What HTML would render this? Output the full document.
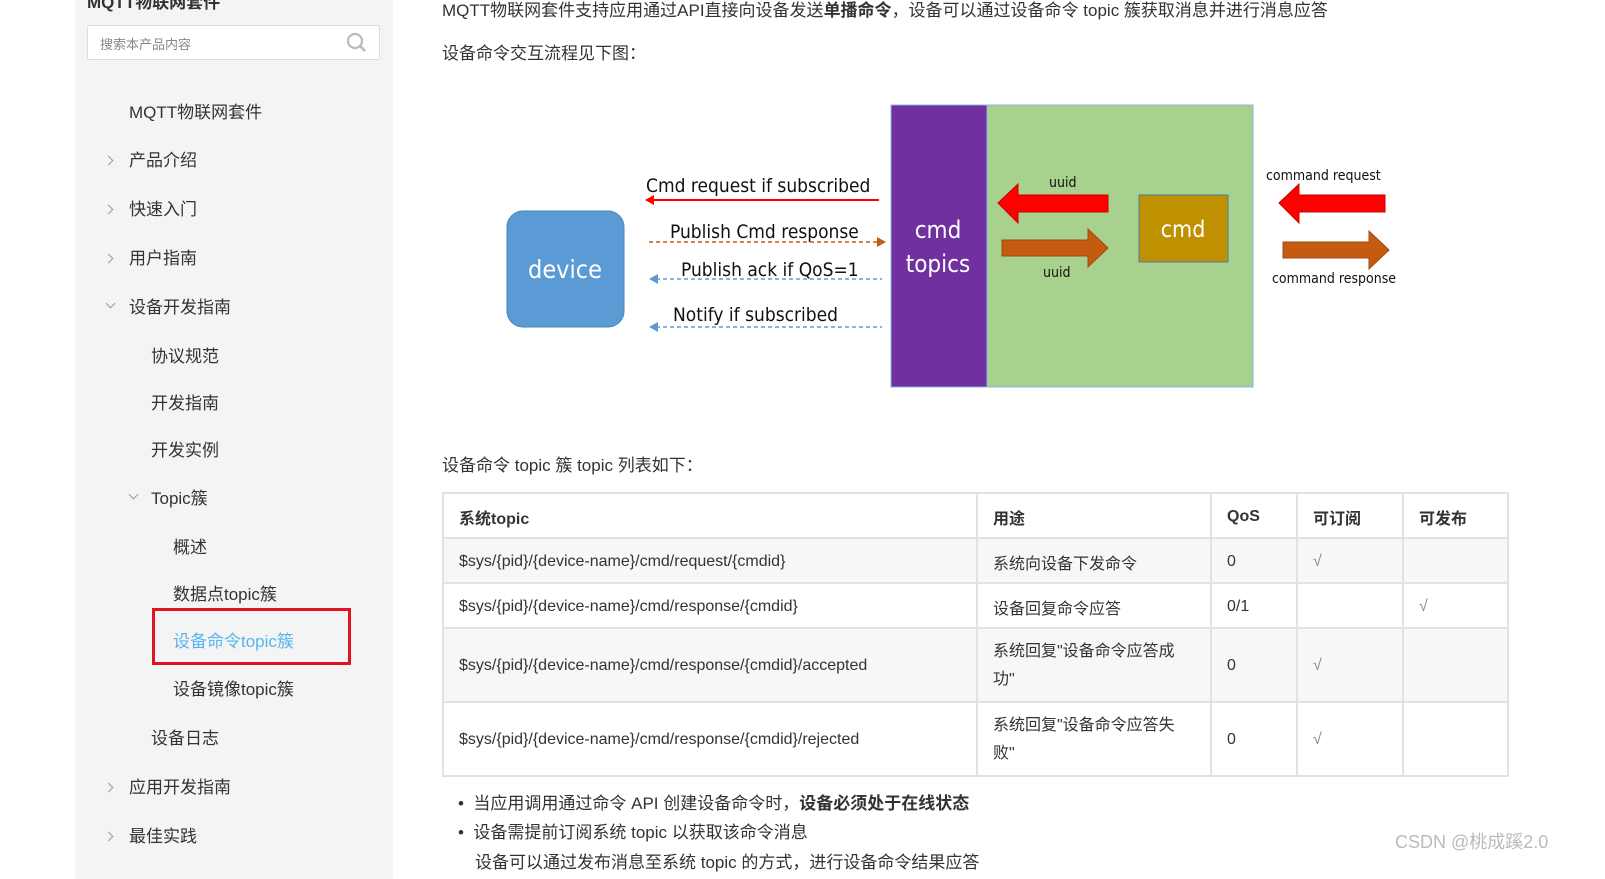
<!DOCTYPE html>
<html><head><meta charset="utf-8"><style>
*{margin:0;padding:0;box-sizing:border-box}
body{width:1605px;height:879px;overflow:hidden;background:#fff;font-family:"Liberation Sans","Noto Sans CJK SC",sans-serif;color:#333;position:relative}
.a{position:absolute;white-space:nowrap}
.side{position:absolute;left:75px;top:0;width:318px;height:879px;background:#f4f4f4}
.n{position:absolute;font-size:17px;color:#333;white-space:nowrap}
.chev{position:absolute;width:7px;height:7px;border-right:1.5px solid #999;border-bottom:1.5px solid #999}
.r{transform:rotate(-45deg)}.d{transform:rotate(45deg)}
table{position:absolute;left:442px;top:492px;width:1067px;border-collapse:collapse;font-size:16px;color:#333}
td,th{border:2px solid #e2e2e2;padding:2px 15px 0;text-align:left;vertical-align:middle}
th{height:45px;font-weight:bold}
tr.g td{background:#f7f7f7}
.ck{color:#888}
</style></head><body>
<div class="side">
 <div class="n" style="left:12px;top:-12px;font-weight:bold;color:#333">MQTT物联网套件</div>
 <div style="position:absolute;left:12px;top:25px;width:293px;height:35px;background:#fff;border:1px solid #ddd;border-radius:2px"></div>
 <div class="n" style="left:25px;top:34px;font-size:13px;color:#888">搜索本产品内容</div>
 <svg style="position:absolute;left:271px;top:32px" width="22" height="22" viewBox="0 0 22 22"><circle cx="9" cy="9" r="7" fill="none" stroke="#bbb" stroke-width="2.2"/><path d="M14 14l5 5" stroke="#bbb" stroke-width="2.6"/></svg>
 <div class="n" style="left:54px;top:98px">MQTT物联网套件</div>
 <div class="chev r" style="left:30px;top:157px"></div><div class="n" style="left:54px;top:146px">产品介绍</div>
 <div class="chev r" style="left:30px;top:206px"></div><div class="n" style="left:54px;top:195px">快速入门</div>
 <div class="chev r" style="left:30px;top:255px"></div><div class="n" style="left:54px;top:244px">用户指南</div>
 <div class="chev d" style="left:32px;top:300px"></div><div class="n" style="left:54px;top:293px">设备开发指南</div>
 <div class="n" style="left:76px;top:342px">协议规范</div>
 <div class="n" style="left:76px;top:389px">开发指南</div>
 <div class="n" style="left:76px;top:436px">开发实例</div>
 <div class="chev d" style="left:55px;top:491px"></div><div class="n" style="left:76px;top:484px">Topic簇</div>
 <div class="n" style="left:98px;top:533px">概述</div>
 <div class="n" style="left:98px;top:580px">数据点topic簇</div>
 <div style="position:absolute;left:77px;top:608px;width:199px;height:57px;border:3px solid #e0141e"></div>
 <div class="n" style="left:98px;top:627px;color:#5ab4f0">设备命令topic簇</div>
 <div class="n" style="left:98px;top:675px">设备镜像topic簇</div>
 <div class="n" style="left:76px;top:724px">设备日志</div>
 <div class="chev r" style="left:30px;top:784px"></div><div class="n" style="left:54px;top:773px">应用开发指南</div>
 <div class="chev r" style="left:30px;top:833px"></div><div class="n" style="left:54px;top:822px">最佳实践</div>
</div>

<div class="a" style="left:442px;top:-4px;font-size:17px">MQTT物联网套件支持应用通过API直接向设备发送<b>单播命令</b>，设备可以通过设备命令 topic 簇获取消息并进行消息应答</div>
<div class="a" style="left:442px;top:39px;font-size:17px">设备命令交互流程见下图：</div>

<svg class="a" style="left:490px;top:100px" width="940" height="300" viewBox="490 100 940 300">
 <rect x="507" y="211" width="117" height="116" rx="16" fill="#5b9bd5" stroke="#4a86c0"/>
 <text x="565" y="278" fill="#fff" font-size="25" text-anchor="middle" font-family="DejaVu Sans Condensed,Liberation Sans,sans-serif">device</text>
 <rect x="891" y="105" width="96" height="282" fill="#7030a0"/>
 <rect x="987" y="105" width="266" height="282" fill="#a9d18e" stroke="#8ab4e0"/>
 <rect x="891" y="105" width="362" height="282" fill="none" stroke="#8ab4e0"/>
 <text x="938" y="238" fill="#fff" font-size="24" text-anchor="middle" font-family="DejaVu Sans Condensed,sans-serif">cmd</text>
 <text x="938" y="272" fill="#fff" font-size="24" text-anchor="middle" font-family="DejaVu Sans Condensed,sans-serif">topics</text>
 <rect x="1139" y="195" width="89" height="67" fill="#bf9000" stroke="#4a7ab0"/>
 <text x="1183" y="237" fill="#fff" font-size="23" text-anchor="middle" font-family="DejaVu Sans Condensed,sans-serif">cmd</text>
 <g font-family="DejaVu Sans Condensed,Liberation Sans,sans-serif" fill="#111">
 <text x="646" y="192" font-size="19">Cmd request if subscribed</text>
 <text x="670" y="238" font-size="19">Publish Cmd response</text>
 <text x="681" y="276" font-size="19">Publish ack if QoS=1</text>
 <text x="673" y="321" font-size="19">Notify if subscribed</text>
 <text x="1049" y="187" font-size="14">uuid</text>
 <text x="1043" y="277" font-size="14">uuid</text>
 <text x="1266" y="180" font-size="14">command request</text>
 <text x="1272" y="283" font-size="14">command response</text>
 </g>
 <path d="M652 200H879" stroke="#f00" stroke-width="2"/><path d="M645 200l9-5v10z" fill="#f00"/>
 <path d="M649 242H877" stroke="#c55a11" stroke-width="1.5" stroke-dasharray="4 3"/><path d="M886 242l-9-5v10z" fill="#c55a11"/>
 <path d="M656 279H882" stroke="#5b9bd5" stroke-width="1.5" stroke-dasharray="4 3"/><path d="M649 279l9-5v10z" fill="#5b9bd5"/>
 <path d="M656 327H882" stroke="#5b9bd5" stroke-width="1.5" stroke-dasharray="4 3"/><path d="M649 327l9-5v10z" fill="#5b9bd5"/>
 <path d="M998 203l20-19v11h90v17h-90v11z" fill="#f00" stroke="#c00"/>
 <path d="M1002 240h86v-11l20 19-20 19v-11h-86z" fill="#c55a11" stroke="#a04a10"/>
 <path d="M1279 203l20-19v11h86v17h-86v11z" fill="#f00" stroke="#c00"/>
 <path d="M1283 242h86v-11l20 19-20 19v-11h-86z" fill="#c55a11" stroke="#a04a10"/>
</svg>

<div class="a" style="left:442px;top:451px;font-size:17px">设备命令 topic 簇 topic 列表如下：</div>

<table>
 <tr><th style="width:534px">系统topic</th><th style="width:234px">用途</th><th style="width:86px">QoS</th><th style="width:106px">可订阅</th><th>可发布</th></tr>
 <tr class="g" style="height:45px"><td>$sys/{pid}/{device-name}/cmd/request/{cmdid}</td><td>系统向设备下发命令</td><td>0</td><td class="ck">√</td><td></td></tr>
 <tr style="height:45px"><td>$sys/{pid}/{device-name}/cmd/response/{cmdid}</td><td>设备回复命令应答</td><td>0/1</td><td></td><td class="ck">√</td></tr>
 <tr class="g" style="height:74px"><td>$sys/{pid}/{device-name}/cmd/response/{cmdid}/accepted</td><td style="line-height:28px;white-space:normal">系统回复"设备命令应答成功"</td><td>0</td><td class="ck">√</td><td></td></tr>
 <tr style="height:74px"><td>$sys/{pid}/{device-name}/cmd/response/{cmdid}/rejected</td><td style="line-height:28px">系统回复"设备命令应答失败"</td><td>0</td><td class="ck">√</td><td></td></tr>
</table>

<div class="a" style="left:458px;top:789px;font-size:17px">•&nbsp; 当应用调用通过命令 API 创建设备命令时，<b>设备必须处于在线状态</b></div>
<div class="a" style="left:458px;top:818px;font-size:17px">•&nbsp; 设备需提前订阅系统 topic 以获取该命令消息</div>
<div class="a" style="left:475px;top:848px;font-size:17px">设备可以通过发布消息至系统 topic 的方式，进行设备命令结果应答</div>
<div class="a" style="left:1395px;top:828px;font-size:18px;color:#bbb">CSDN @桃成蹊2.0</div>
</body></html>
